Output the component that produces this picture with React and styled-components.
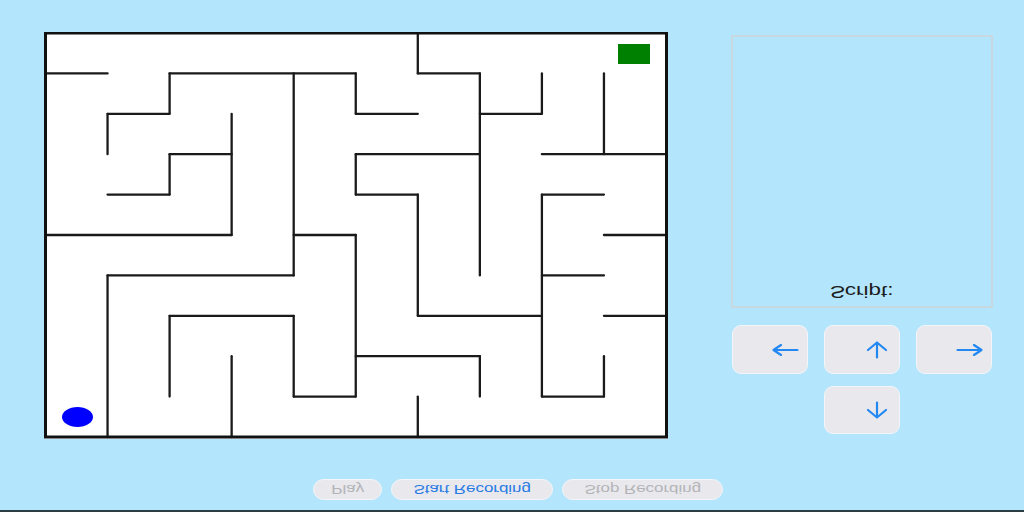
import React from "react";
import styled, { createGlobalStyle } from "styled-components";

const GlobalStyle = createGlobalStyle`
  html, body {
    margin: 0;
    padding: 0;
    background: #b3e5fc;
    font-family: "Liberation Sans", Arial, sans-serif;
  }
`;

const Page = styled.div`
  width: 1024px;
  height: 512px;
  display: flex;
  flex-direction: column;
  overflow: hidden;
`;

const Main = styled.div`
  display: flex;
  padding: 32px 0 0 44px;
`;

const MazeBoard = styled.svg`
  display: block;
  flex: none;
  background: #ffffff;
`;

const Side = styled.div`
  width: 262px;
  margin: 3px 0 0 63px;
  display: flex;
  flex-direction: column;
`;

const ScriptBox = styled.div`
  height: 264px;
  width: 258px;
  border: 2px solid #c7d8e0;
  display: flex;
  flex-direction: column;
  justify-content: flex-end;
  align-items: center;
  padding-bottom: 5px;
  box-sizing: content-box;
`;

const Flipped = styled.span`
  display: inline-block;
  transform: scale(${(p) => p.$sx || 1.4}, -1);
  white-space: nowrap;
`;

const ScriptLabel = styled(Flipped)`
  font-size: 16px;
  color: #1c1c1c;
  height: 20px;
  line-height: 20px;
`;

const Pad = styled.div`
  display: grid;
  grid-template-columns: repeat(3, 76px);
  grid-template-rows: 49px 48px;
  column-gap: 16px;
  row-gap: 12px;
  margin: 17px 0 0 1px;
`;

const PadButton = styled.button`
  grid-column: ${(p) => p.$col};
  grid-row: ${(p) => p.$row};
  display: flex;
  justify-content: flex-end;
  align-items: center;
  padding: 0;
  background: #e8e8ed;
  border: 1.5px solid #f2f6f9;
  border-radius: 9px;
`;

const ArrowSlot = styled.span`
  width: 44px;
  display: flex;
  justify-content: center;
  align-items: center;
`;

const Controls = styled.div`
  display: flex;
  justify-content: center;
  gap: 9px;
  margin-top: 40px;
  padding-left: 12px;
`;

const Pill = styled.button`
  width: ${(p) => p.$w}px;
  height: 21px;
  display: flex;
  justify-content: center;
  align-items: center;
  padding: 0;
  border: 1.5px solid #f4f6f8;
  border-radius: 11px;
  background: #e8e8ed;
  font-family: "Liberation Sans", Arial, sans-serif;
  font-size: 13px;
  color: ${(p) => (p.$active ? "#2a7be4" : "#b4b4b8")};
`;

const BottomEdge = styled.div`
  margin-top: auto;
  height: 2px;
  background: #2d3d46;
`;

const STEP_X = 62.05;
const STEP_Y = 40.4;
const X = (c) => 1.5 + c * STEP_X;
const Y = (r) => 1 + r * STEP_Y;

const hWalls = [
  [1, 0, 1], [1, 2, 5], [1, 6, 7],
  [2, 1, 2], [2, 5, 6], [2, 7, 8],
  [3, 2, 3], [3, 5, 7], [3, 8, 10],
  [4, 1, 2], [4, 5, 6], [4, 8, 9],
  [5, 0, 3], [5, 4, 5], [5, 9, 10],
  [6, 1, 4], [6, 8, 9],
  [7, 2, 4], [7, 6, 8], [7, 9, 10],
  [8, 5, 7],
  [9, 4, 5], [9, 8, 9],
];

const vWalls = [
  [1, 2, 3], [1, 6, 10],
  [2, 1, 2], [2, 3, 4], [2, 7, 9],
  [3, 2, 5], [3, 8, 10],
  [4, 1, 6], [4, 7, 9],
  [5, 1, 2], [5, 3, 4], [5, 5, 9],
  [6, 0, 1], [6, 4, 7], [6, 9, 10],
  [7, 1, 6], [7, 8, 9],
  [8, 1, 2], [8, 4, 9],
  [9, 1, 3], [9, 8, 9],
];

function Maze() {
  return (
    <MazeBoard width="624" height="407" viewBox="0 0 624 407">
      <g stroke="#1a1a1a" strokeWidth="2.3" strokeLinecap="round">
        {hWalls.map(([r, a, b]) => (
          <line key={`h${r}-${a}`} x1={X(a)} y1={Y(r)} x2={X(b)} y2={Y(r)} />
        ))}
        {vWalls.map(([c, a, b]) => (
          <line key={`v${c}-${a}`} x1={X(c)} y1={Y(a)} x2={X(c)} y2={Y(b)} />
        ))}
      </g>
      <rect x="1.5" y="1" width="621" height="404" fill="none" stroke="#111" strokeWidth="3" />
      <rect x="574" y="12" width="32" height="20" fill="#008000" />
      <ellipse cx="33.5" cy="385" rx="15.5" ry="10" fill="#0000ff" />
    </MazeBoard>
  );
}

function Arrow({ dir }) {
  const color = "#2488f2";
  if (dir === "left" || dir === "right") {
    const d = dir === "left" ? "M1.5 6H25.5M9 1L1.5 6L9 11" : "M1.5 6H25.5M18 1L25.5 6L18 11";
    return (
      <svg width="27" height="12" viewBox="0 0 27 12" fill="none" stroke={color} strokeWidth="2.2" strokeLinecap="round" strokeLinejoin="round">
        <path d={d} />
      </svg>
    );
  }
  const d = dir === "up" ? "M11 1.5V16.5M2 9L11 1.5L20 9" : "M11 1.5V16.5M2 9L11 16.5L20 9";
  return (
    <svg width="22" height="18" viewBox="0 0 22 18" fill="none" stroke={color} strokeWidth="2.2" strokeLinecap="round" strokeLinejoin="round">
      <path d={d} />
    </svg>
  );
}

const pads = [
  { dir: "left", col: 1, row: 1 },
  { dir: "up", col: 2, row: 1 },
  { dir: "right", col: 3, row: 1 },
  { dir: "down", col: 2, row: 2 },
];

export default function App() {
  return (
    <Page>
      <GlobalStyle />
      <Main>
        <Maze />
        <Side>
          <ScriptBox>
            <ScriptLabel $sx={1.4}>Script:</ScriptLabel>
          </ScriptBox>
          <Pad>
            {pads.map((p) => (
              <PadButton key={p.dir} $col={p.col} $row={p.row}>
                <ArrowSlot>
                  <Arrow dir={p.dir} />
                </ArrowSlot>
              </PadButton>
            ))}
          </Pad>
        </Side>
      </Main>
      <Controls>
        <Pill $w={69}>
          <Flipped $sx={1.3}>Play</Flipped>
        </Pill>
        <Pill $w={162} $active>
          <Flipped $sx={1.3}>Start Recording</Flipped>
        </Pill>
        <Pill $w={161}>
          <Flipped $sx={1.3}>Stop Recording</Flipped>
        </Pill>
      </Controls>
      <BottomEdge />
    </Page>
  );
}
